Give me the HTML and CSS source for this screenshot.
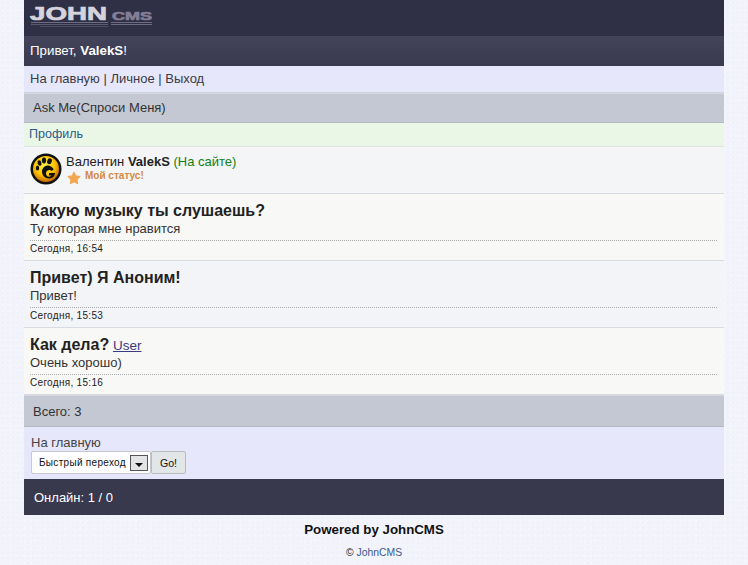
FILE: index.html
```html
<!DOCTYPE html>
<html lang="ru">
<head>
<meta charset="utf-8">
<title>Ask Me</title>
<link rel="stylesheet" href="styles.css">
</head>
<body>
<div class="page">
  <header class="logo-bar">
    <svg class="logo" width="126" height="30" viewBox="0 0 126 30" aria-label="JohnCMS">
      <text class="logo-john" x="1" y="17" textLength="77" lengthAdjust="spacingAndGlyphs">JOHN</text>
      <text class="logo-cms" x="83" y="17" textLength="40" lengthAdjust="spacingAndGlyphs">CMS</text>
      <rect class="logo-r1" x="2" y="19" width="77" height="1"/>
      <rect class="logo-r2" x="2" y="21" width="77" height="1"/>
      <rect class="logo-r3" x="11" y="23" width="68" height="1"/>
      <rect class="logo-r4" x="82" y="19" width="41" height="1"/>
      <rect class="logo-r4" x="82" y="21" width="41" height="1"/>
    </svg>
  </header>
  <div class="hello">Привет, <b>ValekS</b>!</div>
  <nav class="nav"><a href="#">На главную</a> | <a href="#">Личное</a> | <a href="#">Выход</a></nav>
  <div class="phdr">Ask Me(Спроси Меня)</div>
  <div class="tab"><a href="#">Профиль</a></div>
  <div class="user">
    <svg class="avatar" width="32" height="32" viewBox="0 0 32 32">
      <defs>
        <radialGradient id="ag" cx="45%" cy="35%" r="65%">
          <stop offset="0" stop-color="#fff34a"/>
          <stop offset=".6" stop-color="#fcc400"/>
          <stop offset="1" stop-color="#c96a00"/>
        </radialGradient>
      </defs>
      <circle cx="16" cy="16" r="15.500" fill="#111"/>
      <circle cx="16" cy="16" r="13" fill="url(#ag)"/>
      <path d="M18.500 12.500c-3.500-.3-6.500 2.500-6.500 6 0 4 3 7 7 7 3.300 0 5.800-2.200 6-5.500h-6v2.600h2.600c-.5.800-1.500 1.200-2.600 1.100-1.800-.2-3-1.600-3-3.300 0-1.900 1.500-3.300 3.400-3.300 1 0 1.900.4 2.500 1l1.900-1.900c-1.300-1.500-3.300-3.500-5.300-3.700z" fill="#111"/>
      <ellipse cx="7.500" cy="15" rx="1.700" ry="2.500" fill="#111"/>
      <ellipse cx="9.500" cy="10" rx="1.900" ry="2.800" fill="#111" transform="rotate(-15 9.500 10)"/>
      <ellipse cx="14" cy="7.500" rx="2.100" ry="3" fill="#111"/>
      <ellipse cx="19.500" cy="8.300" rx="2.300" ry="3" fill="#111" transform="rotate(20 19.500 8.300)"/>
    </svg>
    <div class="user-info">
      <div>Валентин <b>ValekS</b> <span class="online">(На сайте)</span></div>
      <div class="status">
        <svg class="star" width="14" height="14" viewBox="0 0 14 14"><path d="M7 1l1.900 3.900 4.300.6-3.100 3 .7 4.300L7 10.800 3.200 12.800l.7-4.300-3.100-3 4.300-.6z" fill="#f2a64e" stroke="#f2a64e" stroke-linejoin="round"/></svg>
        <span>Мой статус!</span>
      </div>
    </div>
  </div>
  <article class="post light">
    <div class="post-head"><b class="q">Какую музыку ты слушаешь?</b></div>
    <div class="a">Ту которая мне нравится</div>
    <div class="date">Сегодня, 16:54</div>
  </article>
  <article class="post cool">
    <div class="post-head"><b class="q">Привет) Я Аноним!</b></div>
    <div class="a">Привет!</div>
    <div class="date">Сегодня, 15:53</div>
  </article>
  <article class="post light">
    <div class="post-head"><b class="q">Как дела?</b> <a class="user-link" href="#">User</a></div>
    <div class="a">Очень хорошо)</div>
    <div class="date">Сегодня, 15:16</div>
  </article>
  <div class="phdr total">Всего: 3</div>
  <div class="menu">
    <a href="#">На главную</a>
    <form class="jump">
      <div class="select"><span>Быстрый переход</span><i class="arrow"></i></div>
      <button class="go" type="button">Go!</button>
    </form>
  </div>
  <footer class="online-bar">Онлайн: 1 / 0</footer>
  <div class="powered">Powered by JohnCMS</div>
  <div class="copy">© <a href="#">JohnCMS</a></div>
</div>
</body>
</html>
```
FILE: styles.css
```css
* { box-sizing: border-box; }
html, body { margin: 0; padding: 0; }
body {
  background-color: #f3f4fb;
  background-image: radial-gradient(#eef0f9 1px, transparent 1px), radial-gradient(#f7f8fe 1px, transparent 1px);
  background-size: 5px 5px, 7px 7px;
  font-family: "Liberation Sans", Arial, sans-serif;
  font-size: 13px;
  color: #2a2a2a;
  overflow: hidden;
}
a { color: inherit; text-decoration: none; }
.page { width: 700px; margin: 0 auto 0 24px; }
.logo-bar { height: 36px; background: #2f3046; padding: 3px 0 0 5px; }
.logo { display: block; }
.logo-john { font: bold 18px "Liberation Sans", sans-serif; fill: #d6d3dc; stroke: #d6d3dc; stroke-width: .7px; }
.logo-cms { font: bold 10px "Liberation Sans", sans-serif; fill: #837e96; stroke: #837e96; stroke-width: .6px; }
.logo-r1 { fill: #6d6a82; }
.logo-r2 { fill: #5c5a72; }
.logo-r3 { fill: #4d4c64; }
.logo-r4 { fill: #6d6a82; }
.hello { height: 30px; background: linear-gradient(#43445b, #393a50); color: #fff; padding: 7px 6px 0; font-size: 13.300px; line-height: 16px; }
.nav { height: 27px; background: #e6e7fb; border-bottom: 1px solid #d2d3e2; padding: 5px 6px 0; color: #3a3a44; line-height: 15px; }
.phdr { height: 30px; background: #c4c8d2; border-bottom: 1px solid #b4b8c4; padding: 6px 9px 0; color: #333; border-top: 1px solid #d5d8e0; line-height: 15px; }
.tab { height: 24px; background: #eaf6e6; border-bottom: 1px solid #dfe3e6; padding: 4px 5px 0; color: #2d5a88; line-height: 15px; font-size: 12.500px; }
.user { height: 47px; background: #f4f5f7; border-bottom: 1px solid #d8dbe2; padding: 6px; display: flex; gap: 4px; }
.avatar { flex: none; }
.user-info { line-height: 16px; padding-top: 1px; color: #222; }
.online { color: #128012; }
.status { display: flex; align-items: center; gap: 4px; font-size: 10px; font-weight: bold; color: #d58a3f; height: 14px; }
.status .star { margin: 2px 0 0 1px; }
.status span { margin-top: -3px; margin-left: 0; }
.post { height: 67px; padding: 7px 6px 0; border-bottom: 1px solid #d8dbe2; }
.light { background: #f8f8f6; }
.cool { background: #f3f4f8; }
.post-head { line-height: 19px; height: 19px; font-size: 13.500px; }
.q { font-size: 16px; color: #222; }
.user-link { color: #3c3a80; text-decoration: underline; }
.a { line-height: 17px; color: #333; height: 17px; margin-top: 0; }
.date { border-top: 1px dotted #aaa; margin: 3px 1px 0 0; padding-top: 2px; font-size: 10px; letter-spacing: .3px; line-height: 12px; color: #222; }
.total { height: 32px; padding-top: 8px; }
.menu { height: 52px; background: #e7e7fc; padding: 9px 7px 0; color: #444; line-height: 14px; }
.menu > a { display: block; height: 15px; }
.jump { display: flex; margin: 0; }
.select { width: 120px; height: 23px; background: #fff; border: 1px solid #c8c8d2; border-radius: 2px; display: flex; align-items: center; justify-content: space-between; padding: 0 2px 0 7px; font-size: 10px; letter-spacing: .3px; color: #111; white-space: nowrap; }
.arrow { width: 18px; height: 16px; background: #e2e4e6; border: 1px solid #555; position: relative; display: block; flex: none; }
.arrow::after { content: ""; position: absolute; left: 4px; top: 7px; border: 4px solid transparent; border-top: 4px solid #111; border-bottom: 0; }
.go { width: 35px; height: 23px; background: #e2e6e6; border: 1px solid #b8bcc2; border-radius: 2px; font: 10.600px "Liberation Sans", Arial, sans-serif; color: #111; padding: 0; }
.online-bar { height: 36px; background: #39394e; color: #fff; padding: 11px 10px 0; line-height: 15px; }
.powered { text-align: center; font-weight: bold; font-size: 13.300px; color: #111; margin-top: 6px; line-height: 17px; }
.copy { text-align: center; font-size: 10.400px; margin-top: 9px; color: #222; line-height: 12px; }
.copy a { color: #3b5a8c; }
```
